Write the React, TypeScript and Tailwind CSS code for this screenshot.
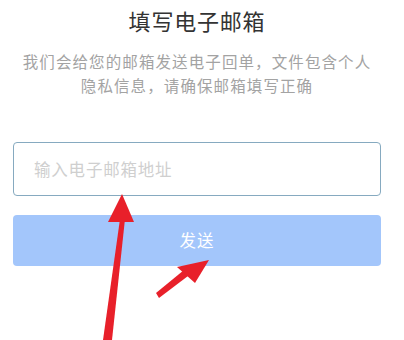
import React from "react";

const Arrows: React.FC = () => (
  <svg className="absolute inset-0 pointer-events-none" width="404" height="340" viewBox="0 0 404 340">
    {/* long arrow up to the input */}
    <polygon points="103,340 112,340 125,219 120,219" fill="#e8202a" />
    <polygon points="122,194 108,222 134,222" fill="#e8202a" />
    {/* short arrow to the button */}
    <polygon points="156,293 159,298 188,276 184,270" fill="#e8202a" />
    <polygon points="209,260 177,267 195,283" fill="#e8202a" />
  </svg>
);

export default function App() {
  return (
    <div className="relative w-[404px] h-[340px] overflow-hidden bg-white font-['Noto_Sans_CJK_SC',sans-serif]">
      <div className="w-[394px] flex flex-col items-center pt-[4px]">
        <h1 className="text-[22px] leading-[32px] text-[#333] tracking-[0.8px]">填写电子邮箱</h1>
        <p className="mt-[13px] w-[360px] text-center text-[15.5px] leading-[24px] tracking-[1.1px] text-[#a3a3a3]">
          我们会给您的邮箱发送电子回单，文件包含个人隐私信息，请确保邮箱填写正确
        </p>
      </div>
      <div className="mx-[13px] mt-[45px] w-[368px] flex flex-col">
        <div className="h-[54px] rounded-[4px] border border-[#86aac0] flex items-center pl-[20px]">
          <span className="text-[16.5px] tracking-[0.8px] text-[#cfcfcf]">输入电子邮箱地址</span>
        </div>
        <button className="mt-[19px] h-[51px] rounded-[4px] bg-[#a3c6fb] text-white text-[16.5px] tracking-[1px]">
          发送
        </button>
      </div>
      <Arrows />
    </div>
  );
}
